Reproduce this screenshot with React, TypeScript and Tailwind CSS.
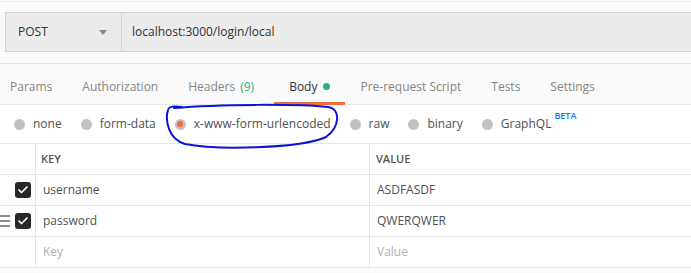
import { Check } from "lucide-react";

const tabs = [
  { label: "Params" },
  { label: "Authorization" },
  { label: "Headers", count: "(9)" },
  { label: "Body", active: true },
  { label: "Pre-request Script" },
  { label: "Tests" },
  { label: "Settings" },
];

const bodyTypes = ["none", "form-data", "x-www-form-urlencoded", "raw", "binary", "GraphQL"];

const rows = [
  { key: "username", value: "ASDFASDF", checked: true },
  { key: "password", value: "QWERQWER", checked: true, handle: true },
];

function Radio({ selected }: { selected?: boolean }) {
  return (
    <span className="w-[11px] h-[11px] rounded-full bg-[#c2c2c2] flex items-center justify-center shrink-0">
      {selected && <span className="w-[6px] h-[6px] rounded-full bg-[#f26b3a]" />}
    </span>
  );
}

function Checkbox() {
  return (
    <span className="w-4 h-4 rounded-[3px] bg-[#282828] flex items-center justify-center">
      <Check className="w-3 h-3 text-white" strokeWidth={3.5} />
    </span>
  );
}

export default function App() {
  return (
    <div className="relative w-[691px] h-[273px] overflow-hidden bg-[#fafafa] font-['Open_Sans',sans-serif] text-[12px] text-[#505050]">
      {/* Request bar */}
      <div className="h-[62px] border-t border-[#ececec] mt-[1px] pt-[10px]">
        <div className="ml-[5px] h-[40px] flex bg-[#ebebeb] border-y border-l border-[#d4d4d4]">
          <div className="w-[116px] flex items-center justify-between pl-[12px] pr-[14px] border-r border-[#d4d4d4]">
            <span className="text-[#333]">POST</span>
            <span className="w-0 h-0 border-l-[4px] border-r-[4px] border-t-[5px] border-l-transparent border-r-transparent border-t-[#8a8a8a]" />
          </div>
          <div className="flex items-center pl-[10px] text-[#333]">localhost:3000/login/local</div>
        </div>
      </div>

      {/* Tabs */}
      <div className="h-[42px] border-t border-b border-[#e6e6e6] flex -ml-[5px]">
        {tabs.map((t) => (
          <div
            key={t.label}
            className={`relative pl-[15px] pt-[5px] flex items-center ${t.count ? "pr-[20px]" : "pr-[15px]"} ${t.active ? "text-[#333]" : "text-[#858585]"}`}
          >
            <span>{t.label}</span>
            {t.count && <span className="ml-[5px] text-[#26b47f]">{t.count}</span>}
            {t.active && <span className="ml-[6px] w-[7px] h-[7px] rounded-full bg-[#26b47f]" />}
            {t.active && <span className="absolute left-0 right-0 bottom-[-1px] h-[3px] bg-[#f26b3a]" />}
          </div>
        ))}
      </div>

      {/* Body type radios */}
      <div className="h-[38px] bg-white flex items-center pl-[14px] gap-[19px]">
        {bodyTypes.map((b) => (
          <div key={b} className="flex items-center gap-[8px]">
            <Radio selected={b === "x-www-form-urlencoded"} />
            <span>{b}</span>
            {b === "GraphQL" && (
              <span className="relative -top-[8px] -ml-[5px] text-[9px] font-semibold text-[#097bed]">BETA</span>
            )}
          </div>
        ))}
      </div>

      {/* Key / value table */}
      <div className="bg-white border-t border-[#e6e6e6]">
        <div className="h-[31px] flex border-b border-[#e6e6e6]">
          <div className="w-[36px] border-r border-[#e6e6e6]" />
          <div className="w-[334px] border-r border-[#e6e6e6] flex items-center pl-[5px] text-[11px] font-semibold text-[#555]">KEY</div>
          <div className="flex-1 flex items-center pl-[6px] text-[11px] font-semibold text-[#555]">VALUE</div>
        </div>
        {rows.map((r) => (
          <div key={r.key} className="h-[31px] flex border-b border-[#e6e6e6]">
            <div className="w-[36px] border-r border-[#e6e6e6] flex items-center">
              <span className="w-[10px] flex flex-col gap-[3px]">
                {r.handle && (
                  <>
                    <span className="h-[2px] bg-[#8c8c8c]" />
                    <span className="h-[2px] bg-[#8c8c8c]" />
                    <span className="h-[2px] bg-[#8c8c8c]" />
                  </>
                )}
              </span>
              <span className="ml-[5px]">{r.checked && <Checkbox />}</span>
            </div>
            <div className="w-[334px] border-r border-[#e6e6e6] flex items-center pl-[7px]">{r.key}</div>
            <div className="flex-1 flex items-center pl-[7px]">{r.value}</div>
          </div>
        ))}
        <div className="h-[31px] flex border-b border-[#e6e6e6]">
          <div className="w-[36px] border-r border-[#e6e6e6]" />
          <div className="w-[334px] border-r border-[#e6e6e6] flex items-center pl-[7px] text-[#b0b0b0]">Key</div>
          <div className="flex-1 flex items-center pl-[7px] text-[#b0b0b0]">Value</div>
        </div>
      </div>

      {/* Hand-drawn annotation */}
      <svg className="absolute inset-0 pointer-events-none" width="691" height="273">
        <path
          d="M 174 108 C 220 104, 300 104, 328 107 C 341 109, 340 127, 326 137 C 300 149, 215 150, 185 144 C 168 139, 165 120, 168 110 C 169 106, 176 106, 182 107"
          fill="none"
          stroke="#0a14d8"
          strokeWidth="2"
          strokeLinecap="round"
        />
      </svg>
    </div>
  );
}
